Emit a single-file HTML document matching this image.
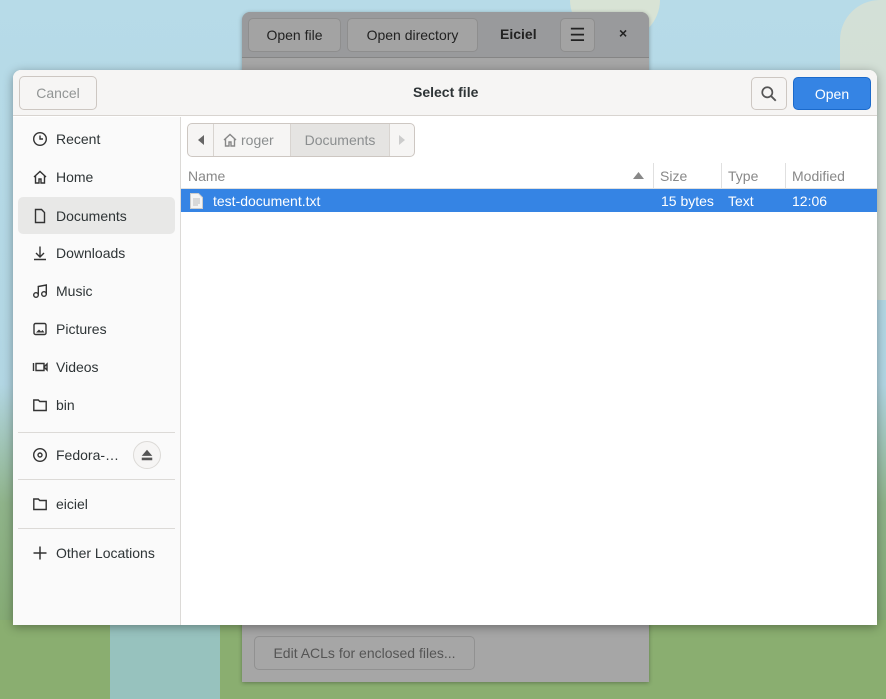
<!DOCTYPE html><html><head><style>
*{box-sizing:border-box;margin:0;padding:0}
body{width:886px;height:699px;overflow:hidden;position:relative;font-family:"Liberation Sans",sans-serif;font-size:14px;color:#2e3436;
background:linear-gradient(180deg,#b7dbe8 0%,#b2d6e3 55%,#8fb38a 72%,#7ea566 100%)}
.abs{position:absolute}
.btn{position:absolute;border:1px solid #cdc7c2;border-radius:5px;background:#f6f5f4;display:flex;align-items:center;justify-content:center}
.side div.r{position:absolute;left:5px;width:157px;height:37px;display:flex;align-items:center;padding-left:14px;gap:8px;border-radius:5px}
.ic{width:16px;height:16px;display:inline-block}
.sep{position:absolute;left:5px;width:157px;height:1px;background:#dcdad7}
</style></head><body>
<div class="abs" style="left:570px;top:0;width:90px;height:40px;background:#efe8c8;border-radius:0 0 40px 40px;opacity:.6"></div>
<div class="abs" style="left:840px;top:0;width:46px;height:300px;background:#e6e2cc;border-radius:40px 0 0 40px;opacity:.6"></div>
<div class="abs" style="left:0;top:620px;width:886px;height:79px;background:#8aae70"></div>
<div class="abs" style="left:110px;top:625px;width:110px;height:74px;background:#9ccbe0;opacity:.7"></div>
<!-- back window -->
<div class="abs" style="left:242px;top:12px;width:407px;height:670px;background:#a6a6a6;border-radius:8px 8px 0 0;box-shadow:0 1px 4px rgba(0,0,0,.3)">
 <div style="height:46px;background:#999a9c;border-radius:8px 8px 0 0;border-bottom:1px solid #858585"></div>
 <div class="btn" style="left:6px;top:6px;width:93px;height:34px;background:#a3a3a3;border-color:#8e8e8e;color:#222">Open file</div>
 <div class="btn" style="left:105px;top:6px;width:131px;height:34px;background:#a3a3a3;border-color:#8e8e8e;color:#222">Open directory</div>
 <div class="abs" style="left:258px;top:14px;font-weight:bold;color:#222">Eiciel</div>
 <div class="btn" style="left:318px;top:6px;width:35px;height:34px;background:#a3a3a3;border-color:#8e8e8e;color:#222;font-size:18px">☰</div>
 <div class="abs" style="left:377px;top:13px;font-weight:bold;color:#222">×</div>
 <div class="btn" style="left:12px;top:624px;width:221px;height:34px;background:#a6a6a6;border-color:#919191;color:#555">Edit ACLs for enclosed files...</div>
</div>
<!-- dialog -->
<div class="abs" style="left:13px;top:70px;width:864px;height:555px;background:#fff;border-radius:8px 8px 0 0;box-shadow:0 2px 10px rgba(0,0,0,.35);overflow:hidden">
 <div style="position:absolute;left:0;top:0;width:864px;height:46px;background:#f6f5f4;border-bottom:1px solid #d8d4d0"></div>
 <div class="btn" style="left:6px;top:6px;width:78px;height:34px;color:#929595">Cancel</div>
 <div class="abs" style="left:400px;top:14px;font-weight:bold">Select file</div>
 <div class="btn" style="left:738px;top:7px;width:36px;height:33px"><svg width="18" height="18" viewBox="0 0 16 16"><circle cx="6.5" cy="6.5" r="4.5" fill="none" stroke="#555" stroke-width="1.5"/><path d="M10 10l4 4" stroke="#555" stroke-width="1.7"/></svg></div>
 <div class="btn" style="left:780px;top:7px;width:78px;height:33px;background:#3584e4;border-color:#1b6acb;color:#fff">Open</div>
 <!-- sidebar -->
 <div class="side abs" style="left:0;top:47px;width:168px;height:508px;background:#fafafa;border-right:1px solid #dcdad7">
  <div class="r" style="top:3px"><svg class="ic" viewBox="0 0 16 16"><circle cx="8" cy="8" r="6.3" fill="none" stroke="#333" stroke-width="1.4"/><path d="M8 4.5V8h3" fill="none" stroke="#333" stroke-width="1.4"/></svg>Recent</div>
  <div class="r" style="top:41px"><svg class="ic" viewBox="0 0 16 16"><path d="M2 8L8 2.5 14 8M3.5 7v7h3.5v-4h2v4h3.5V7" fill="none" stroke="#333" stroke-width="1.4"/></svg>Home</div>
  <div class="r" style="top:80px;background:#e8e8e7"><svg class="ic" viewBox="0 0 16 16"><path d="M3.5 1.5h6l3 3v10h-9z" fill="none" stroke="#333" stroke-width="1.4"/></svg>Documents</div>
  <div class="r" style="top:117px"><svg class="ic" viewBox="0 0 16 16"><path d="M8 1.5v10M4 8l4 4 4-4M2 14.5h12" fill="none" stroke="#333" stroke-width="1.4"/></svg>Downloads</div>
  <div class="r" style="top:155px"><svg class="ic" viewBox="0 0 16 16"><circle cx="4" cy="12" r="2.3" fill="none" stroke="#333" stroke-width="1.4"/><circle cx="12" cy="11" r="2.3" fill="none" stroke="#333" stroke-width="1.4"/><path d="M6.3 12V3.5l8-1.5v9" fill="none" stroke="#333" stroke-width="1.4"/></svg>Music</div>
  <div class="r" style="top:193px"><svg class="ic" viewBox="0 0 16 16"><rect x="2" y="2.5" width="12" height="11" rx="1.5" fill="none" stroke="#333" stroke-width="1.4"/><path d="M4 11.5l3-3 2 2 1.5-1.5 2 2.5z" fill="#333"/></svg>Pictures</div>
  <div class="r" style="top:231px"><svg class="ic" viewBox="0 0 16 16"><path d="M1.5 4v8M4 4.5h8v7H4zM12 8l3-3v6z" fill="none" stroke="#333" stroke-width="1.4"/></svg>Videos</div>
  <div class="r" style="top:269px"><svg class="ic" viewBox="0 0 16 16"><path d="M1.8 3h4.5l1.5 1.5h6.4v9H1.8z" fill="none" stroke="#333" stroke-width="1.4"/></svg>bin</div>
  <div class="sep" style="top:315px"></div>
  <div class="r" style="top:319px"><svg class="ic" viewBox="0 0 16 16"><circle cx="8" cy="8" r="6.3" fill="none" stroke="#333" stroke-width="1.4"/><circle cx="8" cy="8" r="2" fill="none" stroke="#333" stroke-width="1.4"/></svg>Fedora-…</div>
  <div class="abs" style="left:120px;top:324px;width:28px;height:28px;border-radius:50%;border:1px solid #dcdad7;background:#f6f5f4;display:flex;align-items:center;justify-content:center"><svg width="14" height="14" viewBox="0 0 16 16"><path d="M8 2l6 7H2z M2 11h12v3H2z" fill="#555"/></svg></div>
  <div class="sep" style="top:362px"></div>
  <div class="r" style="top:368px"><svg class="ic" viewBox="0 0 16 16"><path d="M1.8 3h4.5l1.5 1.5h6.4v9H1.8z" fill="none" stroke="#333" stroke-width="1.4"/></svg>eiciel</div>
  <div class="sep" style="top:411px"></div>
  <div class="r" style="top:417px"><svg class="ic" viewBox="0 0 16 16"><path d="M8 1.5v13M1.5 8h13" stroke="#333" stroke-width="1.5"/></svg>Other Locations</div>
 </div>
 <!-- main -->
 <div class="abs" style="left:174px;top:53px;width:228px;height:34px;border:1px solid #cdc7c2;border-radius:5px;background:#f6f5f4;display:flex;color:#8b8e8f">
  <div style="width:26px;border-right:1px solid #d8d4d0;display:flex;align-items:center;justify-content:center"><svg width="8" height="10"><path d="M7 0v10L1 5z" fill="#666"/></svg></div>
  <div style="width:77px;border-right:1px solid #d8d4d0;display:flex;align-items:center;padding-left:8px;gap:3px"><svg width="16" height="16" viewBox="0 0 16 16"><path d="M2 8L8 2.5 14 8M3.5 7v7h3.5v-4h2v4h3.5V7" fill="none" stroke="#888" stroke-width="1.4"/></svg>roger</div>
  <div style="width:99px;background:#e5e4e2;border-right:1px solid #d8d4d0;display:flex;align-items:center;justify-content:center">Documents</div>
  <div style="flex:1;display:flex;align-items:center;justify-content:center"><svg width="8" height="10"><path d="M1 0v10L7 5z" fill="#ccc"/></svg></div>
 </div>
 <div class="abs" style="left:168px;top:93px;width:696px;height:26px;border-bottom:1px solid #e0e0e0;color:#888;display:flex;align-items:center">
  <div style="width:473px;padding-left:7px;border-right:1px solid #e0e0e0;height:26px;line-height:26px;position:relative">Name<svg class="abs" style="right:9px;top:9px" width="11" height="7"><path d="M0 7h11L5.5 0z" fill="#888"/></svg></div>
  <div style="width:68px;padding-left:6px;border-right:1px solid #e0e0e0;height:26px;line-height:26px">Size</div>
  <div style="width:64px;padding-left:6px;border-right:1px solid #e0e0e0;height:26px;line-height:26px">Type</div>
  <div style="padding-left:6px;line-height:26px">Modified</div>
 </div>
 <div class="abs" style="left:168px;top:119px;width:696px;height:23px;background:#3584e4;color:#fff;display:flex;align-items:center">
  <svg style="margin-left:9px" width="13" height="16" viewBox="0 0 13 16"><path d="M.5.5h8l4 4v11H.5z" fill="#f4f4f4" stroke="#ccc"/><path d="M3 6h7M3 8h7M3 10h7M3 12h5" stroke="#bbb"/></svg>
  <span style="margin-left:10px;width:448px">test-document.txt</span>
  <span style="width:67px">15 bytes</span><span style="width:64px">Text</span><span>12:06</span>
 </div>
</div>
</body></html>
